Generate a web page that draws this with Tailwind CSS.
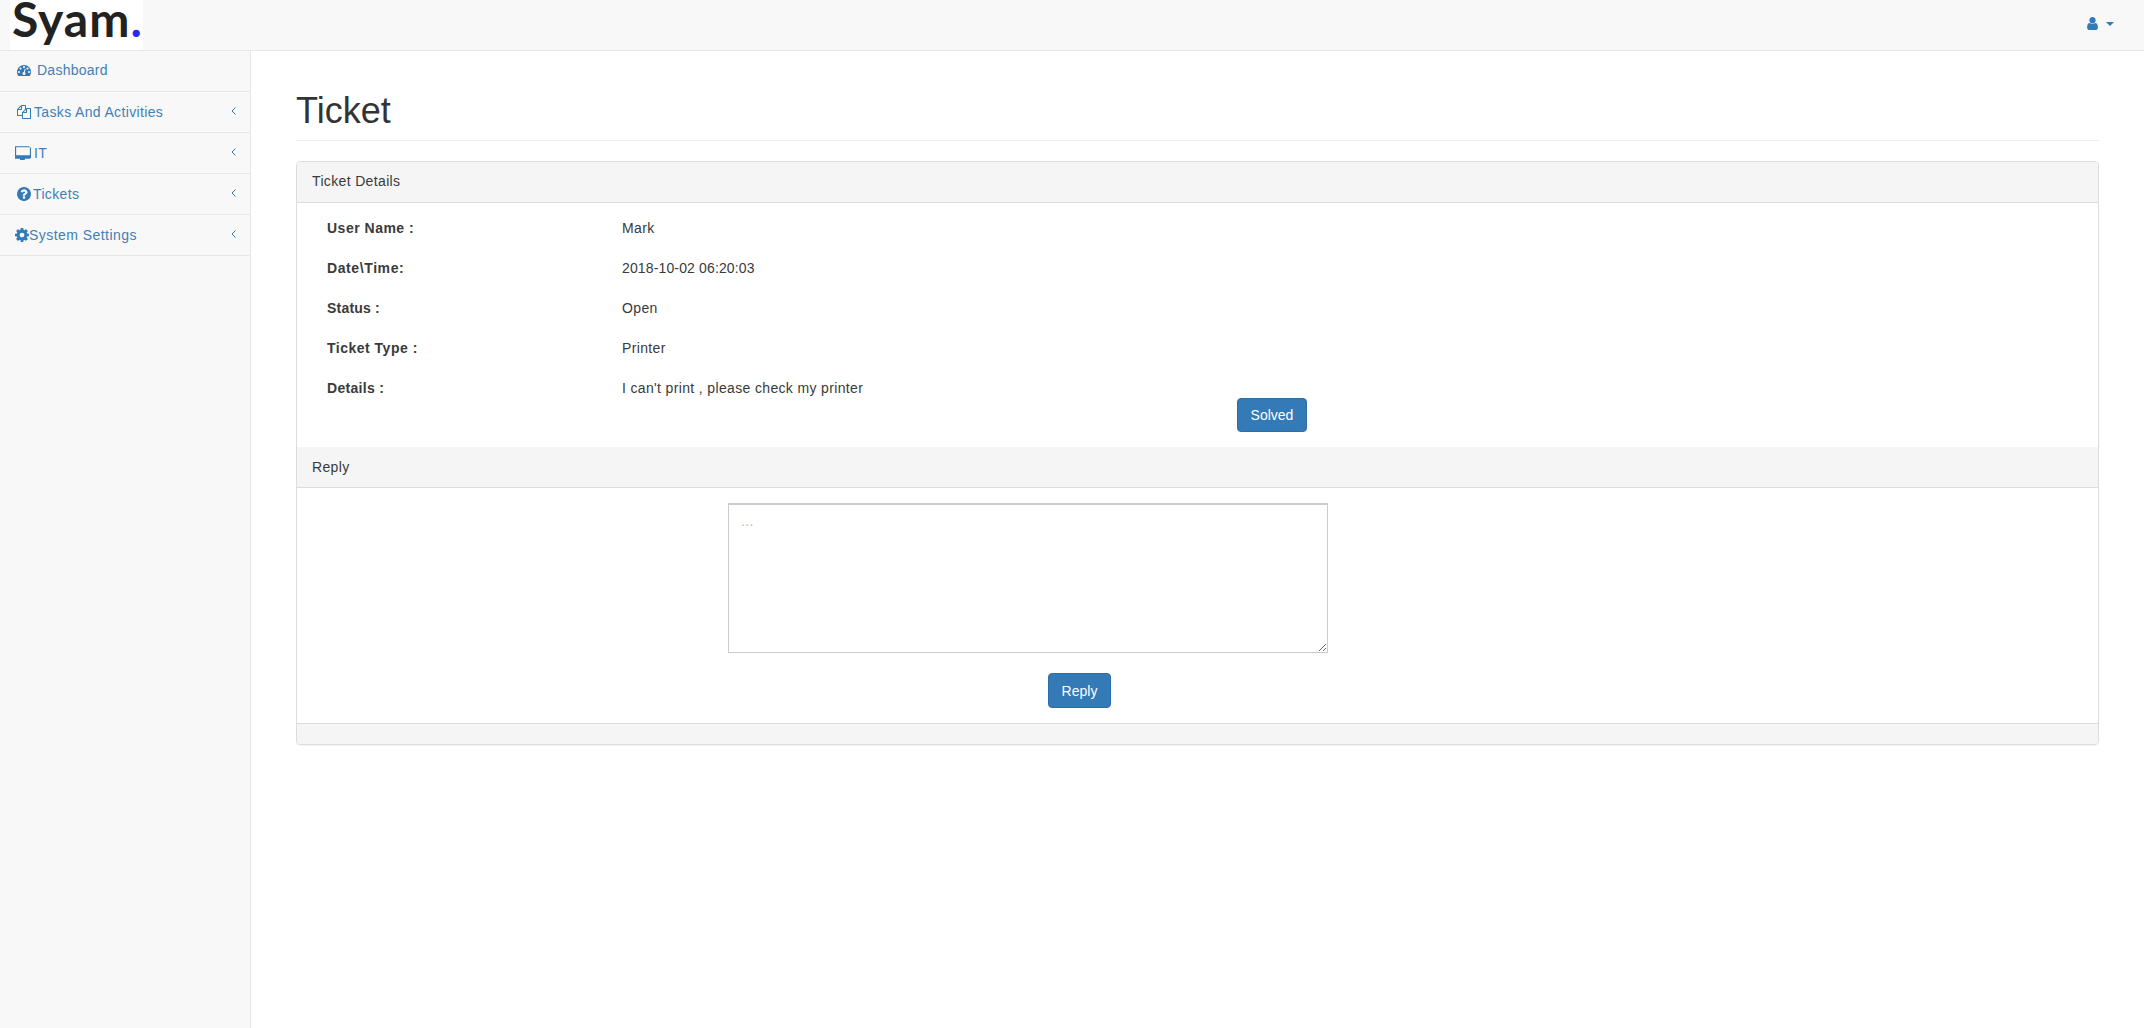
<!DOCTYPE html>
<html lang="en">
<head>
    <meta charset="UTF-8">
    <title>Ticket</title>
    <script src="https://cdn.jsdelivr.net/npm/@tailwindcss/browser@4"></script>
</head>
<body class="bg-white font-['Liberation_Sans',Arial,sans-serif] text-[14px] leading-[20px] text-[#3a3a3a] tracking-[0.35px]">
    <!-- top navbar -->
    <nav class="h-[51px] bg-[#f8f8f8] border-b border-[#e7e7e7] flex items-start justify-between">
        <a class="block ml-[10px] w-[133px] h-[50px] bg-white pl-[2px] font-['Lato',sans-serif] font-bold text-[48px] leading-[37px] tracking-[1px] text-[#222]">Syam<span class="text-[#2a2aee]">.</span></a>
        <div class="flex items-center gap-[6px] mt-[16px] mr-[30px] text-[#337ab7]">
            <svg class="w-[15px] h-[15px]" viewBox="0 0 1792 1792" fill="currentColor"><path d="M1536 1399q0 109-62.5 187t-150.5 78h-854q-88 0-150.5-78t-62.5-187q0-85 8.5-160.5t31.5-152 58.5-131 94-89 134.5-34.5q131 128 313 128t313-128q76 0 134.5 34.5t94 89 58.5 131 31.5 152 8.5 160.5zm-256-887q0 159-112.5 271.5t-271.5 112.5-271.5-112.5-112.5-271.5 112.5-271.5 271.5-112.5 271.5 112.5 112.5 271.5z"/></svg>
            <svg class="w-[8px] h-[4px]" viewBox="0 0 8 4" fill="currentColor"><path d="M0 0h8L4 4z"/></svg>
        </div>
    </nav>

    <div class="flex min-h-[977px]">
        <!-- sidebar -->
        <aside class="w-[251px] shrink-0 bg-[#f8f8f8] border-r border-[#e7e7e7] text-[#427fb5]">
            <a class="h-[41px] pb-[2px] border-b border-[#e7e7e7] flex items-center pl-[17px]">
                <svg class="w-[14px] h-[14px] mr-[6px]" viewBox="0 0 1792 1792" fill="#337ab7"><path d="M384 1152q0-53-37.5-90.5t-90.5-37.5-90.5 37.5-37.5 90.5 37.5 90.5 90.5 37.5 90.5-37.5 37.5-90.5zm192-448q0-53-37.5-90.5t-90.5-37.5-90.5 37.5-37.5 90.5 37.5 90.5 90.5 37.5 90.5-37.5 37.5-90.5zm428 481l101-382q6-26-7.5-48.5t-38.5-29.5-48 6.5-30 39.5l-101 382q-60 5-107 43.5t-63 98.5q-20 77 20 146t117 89 146-20 89-117q16-60-6-117t-72-91zm660-33q0-53-37.5-90.5t-90.5-37.5-90.5 37.5-37.5 90.5 37.5 90.5 90.5 37.5 90.5-37.5 37.5-90.5zm-640-640q0-53-37.5-90.5t-90.5-37.5-90.5 37.5-37.5 90.5 37.5 90.5 90.5 37.5 90.5-37.5 37.5-90.5zm448 192q0-53-37.5-90.5t-90.5-37.5-90.5 37.5-37.5 90.5 37.5 90.5 90.5 37.5 90.5-37.5 37.5-90.5zm320 448q0 261-141 483-19 29-54 29h-1402q-35 0-54-29-141-221-141-483 0-182 71-348t191-286 286-191 348-71 348 71 286 191 191 286 71 348z"/></svg>
                <span class="tracking-[0.25px]">Dashboard</span>
            </a>
            <a class="h-[41px] border-b border-[#e7e7e7] flex items-center pl-[17px] pr-[14px]">
                <svg class="w-[14px] h-[14px] mr-[3px]" viewBox="0 0 1792 1792" fill="#337ab7"><path d="M1696 384q40 0 68 28t28 68v1216q0 40-28 68t-68 28h-960q-40 0-68-28t-28-68v-288h-544q-40 0-68-28t-28-68v-672q0-40 20-88t48-76l408-408q28-28 76-48t88-20h416q40 0 68 28t28 68v328q68-40 128-40h416zm-544 213l-299 299h299v-299zm-640-384l-299 299h299v-299zm196 647l316-316v-416h-384v416q0 40-28 68t-68 28h-416v640h512v-256q0-40 20-88t48-76zm956 804v-1152h-384v416q0 40-28 68t-68 28h-416v640h896z"/></svg>
                Tasks And Activities
                <svg class="ml-auto w-[5px] h-[8px] -mt-[3px]" viewBox="0 0 5 8" fill="none" stroke="#337ab7"><path d="M4.500 .5 1 4l3.500 3.500"/></svg>
            </a>
            <a class="h-[41px] border-b border-[#e7e7e7] flex items-center pl-[15px] pr-[14px]">
                <svg class="w-[16px] h-[14px] mr-[3px]" viewBox="0 0 1792 1536" fill="#337ab7"><path d="M1664 992v-832q0-13-9.5-22.5t-22.5-9.5h-1472q-13 0-22.5 9.5t-9.5 22.5v832q0 13 9.5 22.5t22.5 9.5h1472q13 0 22.5-9.5t9.5-22.5zm128-832v1088q0 66-47 113t-113 47h-544q0 37 16 77.5t32 71 16 43.5q0 26-19 45t-45 19h-512q-26 0-45-19t-19-45q0-14 16-44t32-70 16-78h-544q-66 0-113-47t-47-113v-1088q0-66 47-113t113-47h1472q66 0 113 47t47 113z"/></svg>
                IT
                <svg class="ml-auto w-[5px] h-[8px] -mt-[3px]" viewBox="0 0 5 8" fill="none" stroke="#337ab7"><path d="M4.500 .5 1 4l3.500 3.500"/></svg>
            </a>
            <a class="h-[41px] border-b border-[#e7e7e7] flex items-center pl-[17px] pr-[14px]">
                <svg class="w-[14px] h-[14px] mr-[2px]" viewBox="0 0 1536 1536" fill="#337ab7"><path d="M896 1248v-192q0-14-9-23t-23-9h-192q-14 0-23 9t-9 23v192q0 14 9 23t23 9h192q14 0 23-9t9-23zm256-672q0-88-55.500-163t-138.500-116-170-41q-243 0-371 213-15 24 8 42l132 100q7 6 19 6 16 0 25-12 53-68 86-92 34-24 86-24 48 0 85.500 26t37.500 59q0 38-20 61t-68 45q-63 28-115.500 86.500t-52.500 125.500v36q0 14 9 23t23 9h192q14 0 23-9t9-23q0-19 21.500-49.500t54.500-49.500q32-18 49-28.500t46-35 44.500-48 28-60.500 12.500-81zm384 192q0 209-103 385.500t-279.500 279.500-385.500 103-385.500-103-279.500-279.500-103-385.500 103-385.500 279.500-279.500 385.500-103 385.500 103 279.500 279.500 103 385.500z"/></svg>
                Tickets
                <svg class="ml-auto w-[5px] h-[8px] -mt-[3px]" viewBox="0 0 5 8" fill="none" stroke="#337ab7"><path d="M4.500 .5 1 4l3.500 3.500"/></svg>
            </a>
            <a class="h-[41px] border-b border-[#e7e7e7] flex items-center pl-[15px] pr-[14px]">
                <svg class="w-[14px] h-[14px]" viewBox="128 128 1536 1536" fill="#337ab7"><path d="M1152 896q0-106-75-181t-181-75-181 75-75 181 75 181 181 75 181-75 75-181zm512-109v222q0 12-8 23t-20 13l-185 28q-19 54-39 91 35 50 107 138 10 12 10 25t-9 23q-27 37-99 108t-94 71q-12 0-26-9l-138-108q-44 23-91 38-16 136-29 186-7 28-36 28h-222q-14 0-24.500-8.500t-11.500-21.500l-28-184q-49-16-90-37l-141 107q-10 9-25 9-14 0-25-11-126-114-165-168-7-10-7-23 0-12 8-23 15-21 51-66.500t54-70.500q-27-50-41-99l-183-27q-13-2-21-12.500t-8-23.500v-222q0-12 8-23t19-13l186-28q14-46 39-92-40-57-107-138-10-12-10-24 0-10 9-23 26-36 98.500-107.500t94.500-71.500q13 0 26 10l138 107q44-23 91-38 16-136 29-186 7-28 36-28h222q14 0 24.500 8.500t11.500 21.500l28 184q49 16 90 37l142-107q9-9 24-9 13 0 25 10 129 119 165 170 7 8 7 22 0 12-8 23-15 21-51 66.500t-54 70.500q26 50 41 98l183 28q13 2 21 12.500t8 23.500z"/></svg>
                <span class="tracking-[0.45px]">System Settings</span>
                <svg class="ml-auto w-[5px] h-[8px] -mt-[3px]" viewBox="0 0 5 8" fill="none" stroke="#337ab7"><path d="M4.500 .5 1 4l3.500 3.500"/></svg>
            </a>
        </aside>

        <!-- page content -->
        <main class="flex-1 pl-[45px] pr-[45px]">
            <h1 class="mt-[40px] pb-[9px] mb-[20px] border-b border-[#eee] text-[36px] leading-[40px] font-normal tracking-normal text-[#333]">Ticket</h1>

            <div class="h-[584px] border border-[#ddd] rounded-[4px] shadow-[0_1px_1px_rgba(0,0,0,0.05)] flex flex-col">
                <div class="h-[41px] pb-[2px] px-[15px] flex items-center bg-[#f5f5f5] border-b border-[#ddd] rounded-t-[3px]">Ticket Details</div>
                <div class="pt-[15px] px-[30px]">
                    <div class="flex mb-[20px]"><b class="w-[295px] tracking-[0.5px]">User Name :</b><span>Mark</span></div>
                    <div class="flex mb-[20px]"><b class="w-[295px] tracking-[0.6px]">Date\Time:</b><span class="tracking-[0.14px]">2018-10-02 06:20:03</span></div>
                    <div class="flex mb-[20px]"><b class="w-[295px] tracking-[0.2px]">Status :</b><span>Open</span></div>
                    <div class="flex mb-[20px]"><b class="w-[295px] tracking-[0.5px]">Ticket Type :</b><span>Printer</span></div>
                    <div class="flex"><b class="w-[295px] tracking-[0.3px]">Details :</b><span>I can't print , please check my printer</span></div>
                </div>
                <div class="pl-[940px] pb-[15px]">
                    <button class="w-[70px] h-[34px] bg-[#337ab7] border border-[#2e6da4] rounded-[4px] text-white tracking-normal">Solved</button>
                </div>
                <div class="h-[41px] px-[15px] flex items-center bg-[#f5f5f5] border-b border-[#ddd]">Reply</div>
                <div class="pt-[15px] pb-[15px]">
                    <textarea placeholder="..." class="block ml-[431px] w-[600px] h-[150px] px-[12px] py-[6px] bg-white border border-[#ccc] border-t-2 outline-none placeholder:text-[#bbb]"></textarea>
                    <button class="block mt-[20px] ml-[751px] w-[63px] h-[35px] bg-[#337ab7] border border-[#2e6da4] rounded-[4px] text-white tracking-normal">Reply</button>
                </div>
                <div class="flex-1 bg-[#f5f5f5] border-t border-[#ddd] rounded-b-[3px]"></div>
            </div>
        </main>
    </div>
</body>
</html>
